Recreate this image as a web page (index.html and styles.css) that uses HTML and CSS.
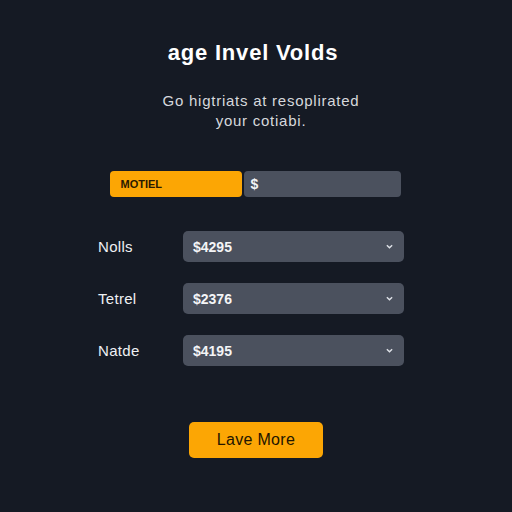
FILE: index.html
```html
<!DOCTYPE html>
<html>
<head>
<meta charset="utf-8">
<link rel="stylesheet" href="styles.css">
</head>
<body>
<main class="page">
  <h1 class="title">age Invel Volds</h1>
  <p class="subtitle">Go higtriats at resoplirated<br>your cotiabi.</p>
  <div class="amount">
    <div class="amount-tag">MOTIEL</div>
    <div class="amount-input">$</div>
  </div>
  <div class="fields">
    <div class="field">
      <span class="field-label">Nolls</span>
      <div class="select"><span>$4295</span><svg class="chev" viewBox="0 0 8 5" width="7" height="5"><path d="M1 1l3 3 3-3" fill="none" stroke="#dfe2e8" stroke-width="1.6"/></svg></div>
    </div>
    <div class="field">
      <span class="field-label">Tetrel</span>
      <div class="select"><span>$2376</span><svg class="chev" viewBox="0 0 8 5" width="7" height="5"><path d="M1 1l3 3 3-3" fill="none" stroke="#dfe2e8" stroke-width="1.6"/></svg></div>
    </div>
    <div class="field">
      <span class="field-label">Natde</span>
      <div class="select"><span>$4195</span><svg class="chev" viewBox="0 0 8 5" width="7" height="5"><path d="M1 1l3 3 3-3" fill="none" stroke="#dfe2e8" stroke-width="1.6"/></svg></div>
    </div>
  </div>
  <button class="cta">Lave More</button>
</main>
</body>
</html>
```
FILE: styles.css
```css
html, body {
  margin: 0;
  padding: 0;
  background: #151a24;
  height: 100%;
}
.page {
  width: 512px;
  height: 512px;
  box-sizing: border-box;
  padding-top: 40px;
  display: flex;
  flex-direction: column;
  align-items: center;
  font-family: "Liberation Sans", Arial, sans-serif;
  color: #f2f3f5;
}
.title {
  margin: 0;
  font-size: 22px;
  font-weight: 700;
  line-height: 26px;
  letter-spacing: 0.8px;
  color: #ffffff;
  transform: translateX(-3px);
}
.subtitle {
  margin: 25px 0 0;
  font-size: 15px;
  line-height: 20px;
  letter-spacing: 0.75px;
  text-align: center;
  color: #d6d8dc;
  transform: translateX(5px);
}
.amount {
  margin-top: 40px;
  display: flex;
  gap: 2px;
  width: 291px;
  height: 26px;
  transform: translateX(-1px);
}
.amount-tag {
  width: 132px;
  background: #fca604;
  border-radius: 4px;
  color: #2a1a00;
  font-size: 11px;
  font-weight: 700;
  line-height: 26px;
  padding-left: 11px;
  box-sizing: border-box;
}
.amount-input {
  flex: 1;
  background: #4b515e;
  border-radius: 4px;
  color: #f4f5f7;
  font-size: 14px;
  font-weight: 700;
  line-height: 26px;
  padding-left: 7px;
}
.fields {
  margin-top: 34px;
  width: 306px;
  display: flex;
  flex-direction: column;
  gap: 21px;
  transform: translateX(-5px);
}
.field {
  display: flex;
  align-items: center;
  justify-content: space-between;
}
.field-label {
  font-size: 15px;
  letter-spacing: 0.3px;
  color: #eef0f3;
}
.select {
  width: 221px;
  height: 31px;
  box-sizing: border-box;
  background: #4b515e;
  border-radius: 5px;
  display: flex;
  align-items: center;
  justify-content: space-between;
  padding: 0 11px 0 10px;
  font-size: 14px;
  font-weight: 700;
  color: #f4f5f7;
}
.chev { display: block; }
.cta {
  margin-top: 56px;
  width: 134px;
  height: 36px;
  border: none;
  border-radius: 5px;
  background: #fca604;
  color: #231500;
  font-family: "Liberation Sans", Arial, sans-serif;
  font-size: 16px;
  font-weight: 400;
  letter-spacing: 0.3px;
  cursor: pointer;
}
```
